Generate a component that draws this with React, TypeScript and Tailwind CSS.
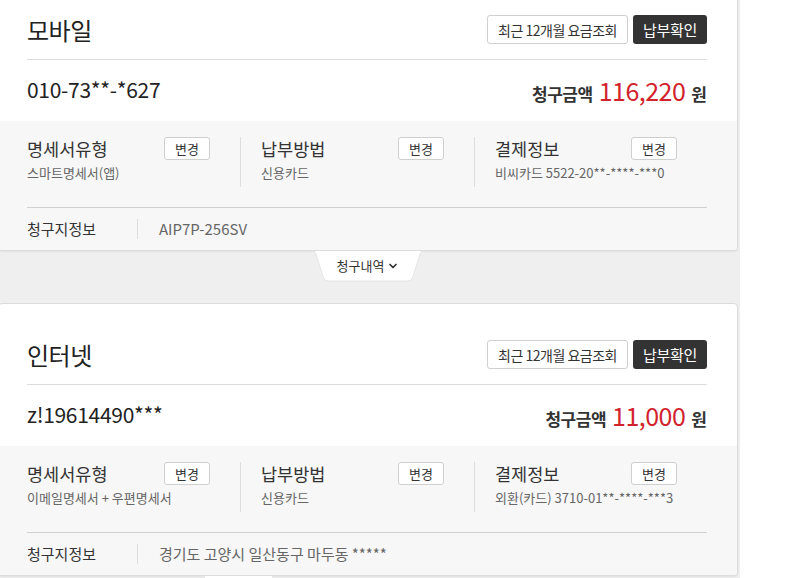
import { ChevronDown } from 'lucide-react';

type Bill = {
    title: string;
    number: string;
    amount: string;
    statement: string;
    method: string;
    payment: string;
    address: string;
};

const bills: Bill[] = [
    {
        title: '모바일',
        number: '010-73**-*627',
        amount: '116,220',
        statement: '스마트명세서(앱)',
        method: '신용카드',
        payment: '비씨카드 5522-20**-****-***0',
        address: 'AIP7P-256SV',
    },
    {
        title: '인터넷',
        number: 'z!19614490***',
        amount: '11,000',
        statement: '이메일명세서 + 우편명세서',
        method: '신용카드',
        payment: '외환(카드) 3710-01**-****-***3',
        address: '경기도 고양시 일산동구 마두동 *****',
    },
];

function ChangeButton() {
    return (
        <button className="w-[46px] h-[23px] shrink-0 rounded-[3px] border border-[#cfcfcf] bg-white text-[13px] leading-none text-[#333]">
            변경
        </button>
    );
}

function InfoCol({ label, value, first }: { label: string; value: string; first?: boolean }) {
    return (
        <div className={first ? 'h-[50px] pr-[30px]' : 'h-[50px] pl-[20px] pr-[30px] border-l border-[#dedede]'}>
            <div className="flex items-start justify-between">
                <span className="text-[17.5px] leading-[24px] text-[#333]">{label}</span>
                <ChangeButton />
            </div>
            <div className="mt-[4px] text-[13px] leading-[15px] text-[#666] whitespace-nowrap">{value}</div>
        </div>
    );
}

function BillCard({ bill }: { bill: Bill }) {
    return (
        <div className="-ml-[2px] w-[740px] rounded-[4px] border border-[#dcdcdc] bg-white overflow-hidden shadow-[0_1px_2px_rgba(0,0,0,0.06)]">
            {/* header */}
            <div className="pt-[36px] px-[28px] pr-[30px]">
                <div className="flex items-center justify-between h-[29px] mb-[15px]">
                    <h2 className="text-[24px] leading-none text-[#222] tracking-[-0.5px]">{bill.title}</h2>
                    <div className="flex gap-[5px]">
                        <button className="h-[29px] w-[141px] rounded-[3px] border border-[#cfcfcf] bg-white text-[14px] leading-none text-[#333] tracking-[-0.5px]">
                            최근 12개월 요금조회
                        </button>
                        <button className="h-[29px] w-[74px] rounded-[3px] bg-[#333] text-[15px] leading-none text-white tracking-[-0.3px]">
                            납부확인
                        </button>
                    </div>
                </div>
                <div className="h-px bg-[#dddddd]" />
                <div className="flex items-center justify-between h-[61px]">
                    <span className="text-[21px] leading-none text-[#222] tracking-[-0.3px] mt-[-2px]">{bill.number}</span>
                    <div className="flex items-baseline gap-[6px] mt-[4px]">
                        <span className="text-[17px] font-bold text-[#333] tracking-[-0.5px]">청구금액</span>
                        <span className="text-[25px] leading-none text-[#d2232d] tracking-[-0.5px]">{bill.amount}</span>
                        <span className="text-[17px] font-bold text-[#333]">원</span>
                    </div>
                </div>
            </div>

            {/* info */}
            <div className="bg-[#f7f7f7] pt-[16px] pl-[28px] pr-[30px]">
                <div className="grid grid-cols-[213px_234px_1fr]">
                    <InfoCol label="명세서유형" value={bill.statement} first />
                    <InfoCol label="납부방법" value={bill.method} />
                    <InfoCol label="결제정보" value={bill.payment} />
                </div>
                <div className="mt-[20px] h-px bg-[#d0d0d0]" />
                <div className="flex items-center h-[42px] text-[15px]">
                    <span className="w-[111px] text-[#333] border-r border-[#dedede] leading-[20px]">청구지정보</span>
                    <span className="pl-[21px] text-[#666] leading-[20px]">{bill.address}</span>
                </div>
            </div>
        </div>
    );
}

function BillTab() {
    return (
        <div className="flex justify-center pr-[4px]">
            <div className="relative w-[106px] h-[31px] flex items-center justify-center">
                <svg className="absolute inset-0" width="106" height="31" viewBox="0 0 106 31">
                    <path d="M0 0 H106 L97.5 27 Q96.5 30 93 30 H13 Q9.5 30 8.5 27 Z" fill="#ffffff" stroke="#e4e4e4" strokeWidth="1" />
                    <rect x="0" y="0" width="106" height="1.5" fill="#ffffff" />
                </svg>
                <span className="relative flex items-center gap-[3px] text-[13px] leading-none text-[#333] mt-[-2px]">
                    청구내역
                    <ChevronDown size={12} strokeWidth={3.5} className="text-[#333]" />
                </span>
            </div>
        </div>
    );
}

export default function App() {
    return (
        <div className="w-[806px] h-[578px] overflow-hidden bg-white font-['Malgun_Gothic','Noto_Sans_CJK_KR',sans-serif]">
            <div className="w-[740px] bg-[#efefef] mt-[-22px]">
                <BillCard bill={bills[0]} />
                <div className="h-[52px]">
                    <BillTab />
                </div>
                <BillCard bill={bills[1]} />
                <div className="h-[20px] pl-[205px]">
                    <div className="w-[67px] h-[20px] bg-white" />
                </div>
            </div>
        </div>
    );
}
